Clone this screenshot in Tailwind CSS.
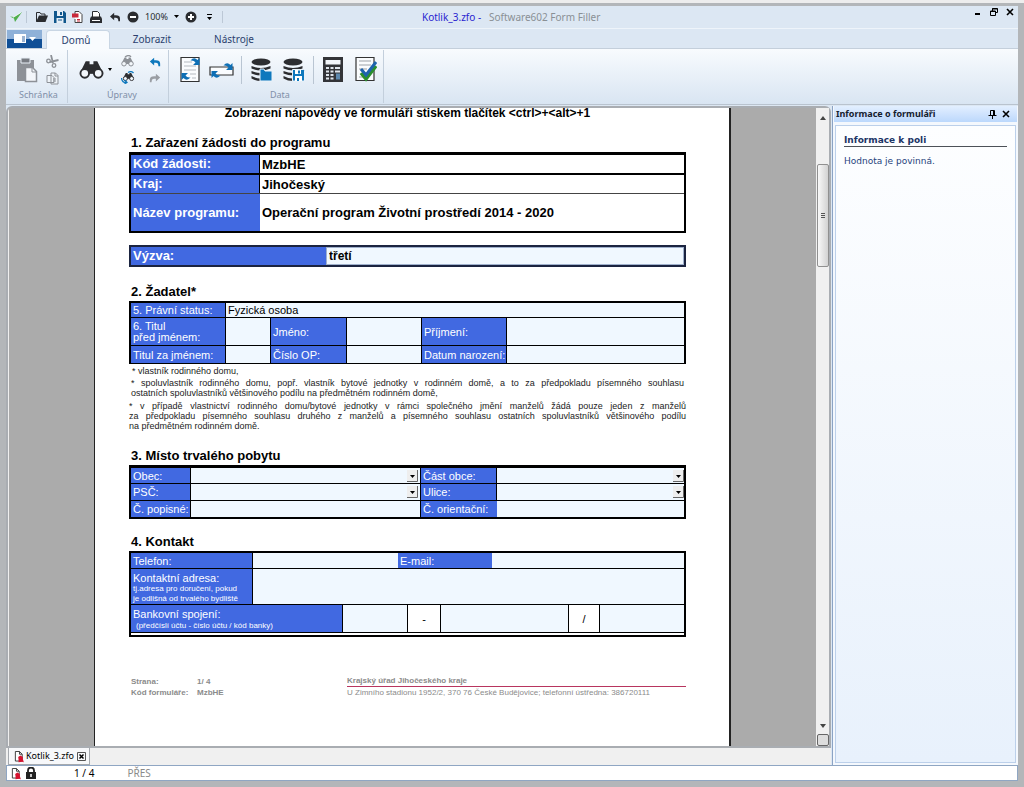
<!DOCTYPE html>
<html lang="cs" class="h-full bg-[#ededed] pt-[3px]">
<head>
<meta charset="utf-8">
<title>Kotlik_3.zfo - Software602 Form Filler</title>
<script src="https://cdn.jsdelivr.net/npm/@tailwindcss/browser@4"></script>
</head>
<body class="flex h-full flex-col overflow-hidden border-x-[6px] border-t-[3px] border-b-[6px] border-[#b3b6b9] bg-[#dce7f3] font-['Noto_Sans',sans-serif] text-[11px] leading-4 text-black">

<svg class="hidden">
  <defs>
    <symbol id="redo" viewBox="0 0 14 12"><path d="M1 11V8q0-4 5-4h2V1l5 4.500-5 4.500V7H6Q3 7 3 11z"/></symbol>
    <symbol id="binoc" viewBox="0 0 26 20"><path d="M7 1h4v3h4V1h4l6 12H1z"/><circle cx="6" cy="13.500" r="4.500" fill="#f3f7fb" stroke="currentColor" stroke-width="2"/><circle cx="20" cy="13.500" r="4.500" fill="#f3f7fb" stroke="currentColor" stroke-width="2"/><path d="M10 8h6v6h-6z"/></symbol>
    <symbol id="doc" viewBox="0 0 11 13"><path d="M1.500 1h4.500l3 3v7.500h-7.500z" fill="#fff" stroke="#333" stroke-width="1"/><path d="M6 1v3h3" fill="none" stroke="#333"/><path d="M5 12.800V9.500L4.600 7 7 5.500 9.800 7v2.500l1 3.300-2-.6z" fill="#d5122e"/></symbol>
    <symbol id="db" viewBox="0 0 22 24"><ellipse cx="10" cy="4" rx="9.500" ry="3.500"/><path d="M.5 8q9.500 4 19 0v2.500q-9.500 4-19 0zM.5 13q9.500 4 19 0v2.500q-9.500 4-19 0zM.5 18q6 3 10 2.500V23q-6 0-10-2.500z"/></symbol>
    <symbol id="turn" viewBox="0 0 10 9"><path d="M.5 3.500Q4-.5 7.500 3L9.500 1v7H3l2.500-2.500Q4 3 .5 3.500z" fill="#0e6fb5"/></symbol>
  </defs>
</svg>

<header class="shrink-0">
  <div class="flex h-[23px] items-center border-b border-[#eef4fa] pl-1">
    <svg class="h-3 w-3" viewBox="0 0 12 12"><path d="M0 5.500l4 .5 8-5-7 10-1-3.500z" fill="#4fae4c"/><path d="M3 6.500L11 1.500" stroke="#fff" stroke-width=".7"/></svg>
    <span class="mx-1 h-3 w-px bg-[#bcc8d6]"></span>
    <div class="flex items-center gap-[6px] pl-[5px] text-[#2a2c30]">
      <button aria-label="Otevřít"><svg class="h-3 w-3" viewBox="0 0 12 12"><path d="M.5 10.500v-9H4l1 1.500h4v2" fill="none" stroke="currentColor"/><path d="M0 11l3-6.500h9L9.500 11z" fill="currentColor"/></svg></button>
      <button aria-label="Uložit"><svg class="h-3 w-3" viewBox="0 0 12 12"><path d="M0 0h10l2 2v10H0z" fill="#10568c"/><path d="M3 0h6v5H3zM2.500 7h7v5h-7z" fill="#e6eef6"/><path d="M6 1h2v3H6zM4 8.500h4v1H4z" fill="#10568c"/></svg></button>
      <button aria-label="Export do PDF"><svg class="h-3 w-3" viewBox="0 0 12 12"><path d="M3 3.500V.5h4l3 3v8H3V8" fill="#fff" stroke="#444"/><path d="M0 2.500h6.500v4H0z" fill="#c9283a"/><path d="M5 8.500h3M5 10h3" stroke="#c9283a"/></svg></button>
      <button aria-label="Tisk"><svg class="h-3 w-3" viewBox="0 0 12 12"><path d="M2.500 6V.5h5l2 2V6" fill="#fff" stroke="currentColor"/><path d="M1 5.500h10l1 2.500v4H0V8z" fill="currentColor"/><path d="M2 9.500h8" stroke="#fff"/></svg></button>
      <button aria-label="Zpět" class="ml-px"><svg class="h-[10px] w-3 -scale-x-100 fill-current"><use href="#redo"/></svg></button>
      <button aria-label="Oddálit"><svg class="h-3 w-3" viewBox="0 0 12 12"><circle cx="6" cy="6" r="5.500" fill="currentColor"/><path d="M3 6h6" stroke="#fff" stroke-width="2"/></svg></button>
      <span class="text-[9px]">100%</span>
      <svg class="h-1 w-[5px]" viewBox="0 0 5 4"><path d="M0 0h5L2.500 3z"/></svg>
      <button aria-label="Přiblížit"><svg class="h-3 w-3" viewBox="0 0 12 12"><circle cx="6" cy="6" r="5.500" fill="currentColor"/><path d="M3 6h6M6 3v6" stroke="#fff" stroke-width="2"/></svg></button>
      <svg class="ml-1 h-[6px] w-[5px]" viewBox="0 0 5 6"><path d="M0 0h5v1H0zM0 3h5L2.500 6z"/></svg>
      <span class="ml-1 h-3 w-px bg-[#bcc8d6]"></span>
    </div>
    <h1 class="ml-[199px] text-[10px] whitespace-pre text-[#2a1fd0]">Kotlik_3.zfo -  <span class="text-[#8a9095]"> Software602 Form Filler</span></h1>
    <div class="ml-auto flex items-center gap-2 self-start pt-[2px] pr-1">
      <button aria-label="Minimalizovat"><svg class="h-2 w-2" viewBox="0 0 8 8"><path d="M1 6h5" stroke="#000" stroke-width="2"/></svg></button>
      <button aria-label="Obnovit"><svg class="h-2 w-2" viewBox="0 0 8 8"><path d="M2.500 3V.5h5v4H6M.5 3h5v4.500h-5zM2 1h5.500M0 3.500h6" fill="none" stroke="#000"/></svg></button>
      <button aria-label="Zavřít"><svg class="h-2 w-2" viewBox="0 0 8 8"><path d="M1 1l6 6M7 1l-6 6" stroke="#000" stroke-width="1.600"/></svg></button>
    </div>
  </div>

  <nav class="flex h-[20px] items-end border-b border-[#c4cfdb] text-[10px] text-[#2b3f6e]">
    <button aria-label="Nabídka" class="mr-1 ml-px flex h-[18px] w-[35px] items-center justify-center bg-linear-to-b from-[#8fb1d8] from-50% to-[#104f96] to-50%">
      <svg class="h-3 w-6" viewBox="0 0 24 12"><path d="M1 1h12v9H1zM16 4h7l-3.500 4z" fill="#fff"/><path d="M9 4h3M9 6h3M9 8h3" stroke="#3a6aa5"/></svg>
    </button>
    <a href="#" class="-mb-px flex h-[19px] w-16 items-center justify-center rounded-t-sm border-x border-t border-[#c9d6e4] bg-[#f8fbfe] pr-1">Domů</a>
    <a href="#" class="flex h-[19px] w-[84px] items-center justify-center">Zobrazit</a>
    <a href="#" class="flex h-[19px] w-20 items-center justify-center">Nástroje</a>
  </nav>

  <div class="flex h-[55px] bg-linear-to-b from-[#f8fbfe] to-[#d9e5f2] pt-px pb-px text-[9px] text-[#7f8fa8]">
    <section class="flex w-[62px] flex-col border-r border-[#c3cfdc] pl-[10px]">
      <div class="flex flex-1 items-center gap-2 text-[#8d9197]">
        <button aria-label="Vložit"><svg class="h-[26px] w-[22px]" viewBox="0 0 22 26"><path d="M1 3h17v21H1z" fill="#8d9197"/><path d="M5 1h9v5H5z" fill="#777b82" stroke="#e8eff6"/><path d="M9.500 10.500h7l4 4v10h-11z" fill="#f3f6fa" stroke="#8d9197" stroke-width="1.500"/><path d="M16 10v5h5" fill="none" stroke="#8d9197"/></svg></button>
        <div class="flex flex-col gap-1">
          <button aria-label="Vyjmout"><svg class="block h-[13px] w-[13px]" viewBox="0 0 13 13"><path d="M5 0l2 8M12.500 5L4 7" stroke="currentColor" stroke-width="1.800"/><circle cx="2.500" cy="6" r="1.800" fill="none" stroke="currentColor" stroke-width="1.300"/><circle cx="8" cy="10.500" r="1.800" fill="none" stroke="currentColor" stroke-width="1.300"/></svg></button>
          <button aria-label="Kopírovat"><svg class="block h-[13px] w-[13px]" viewBox="0 0 13 13"><path d="M1 3.500h5l2 2v5H1zM5 1h4.500l2.500 2.500V12H5z" fill="#eef3f8" stroke="currentColor"/><path d="M9 1v3h3M7 7h3M7 9h3" fill="none" stroke="currentColor"/></svg></button>
        </div>
      </div>
      <h2 class="pb-[2px] pl-[3px] leading-3">Schránka</h2>
    </section>
    <section class="flex w-[101px] flex-col border-r border-[#c3cfdc] pl-[11px]">
      <div class="flex flex-1 items-center">
        <button aria-label="Najít"><svg class="h-5 w-[25px] fill-current text-[#2c2d30]"><use href="#binoc"/></svg></button>
        <svg class="ml-1 h-1 w-1" viewBox="0 0 4 4"><path d="M0 0h4L2 3z"/></svg>
        <div class="ml-[9px] flex flex-col gap-1">
          <button aria-label="Najít další"><svg class="block h-3 w-[13px] fill-current text-[#8d9197]" viewBox="0 0 26 24"><use href="#binoc" y="4" width="26" height="20"/><path d="M8 4q8-6 12 0" fill="none" stroke="currentColor" stroke-width="2.500"/></svg></button>
          <button aria-label="Nahradit"><svg class="block h-[13px] w-[14px] fill-current text-[#2c2d30]" viewBox="0 0 28 26"><use href="#binoc" x="3" y="3" width="24" height="18"/><path d="M1 14q1 9 9 9M7 18l5 5-5 3M14 3q7-4 11 1" fill="none" stroke="#0e78bd" stroke-width="2.500"/></svg></button>
        </div>
        <div class="ml-[14px] flex flex-col gap-1">
          <button aria-label="Zpět"><svg class="block h-3 w-3 -scale-x-100 fill-[#0e78bd]"><use href="#redo"/></svg></button>
          <button aria-label="Znovu"><svg class="block h-3 w-3 fill-[#9a9ea4]"><use href="#redo"/></svg></button>
        </div>
      </div>
      <h2 class="pb-[2px] pl-[28px] leading-3">Úpravy</h2>
    </section>
    <section class="flex w-[215px] flex-col border-r border-[#c3cfdc] pl-[11px]">
      <div class="flex flex-1 items-center">
        <button aria-label="Obnovit formulář"><svg class="h-[27px] w-[21px]" viewBox="0 0 21 27"><path d="M1 1.500h18v24H1z" fill="#fafcfe" stroke="#333" stroke-width="1.200"/><path d="M4 6h8M4 10h12M4 14h12M10 18h6M12 22h4" stroke="#b5bac0"/><use href="#turn" x="10" y="1" width="10" height="9"/><use href="#turn" width="10" height="9" transform="rotate(180 5.500 12.500)"/></svg></button>
        <button aria-label="Obnovit pole" class="ml-2"><svg class="h-5 w-[26px]" viewBox="0 0 26 20"><path d="M1 7h23v8H1z" fill="#fafcfe" stroke="#333" stroke-width="1.200"/><use href="#turn" x="14" y="2" width="10" height="9"/><use href="#turn" width="10" height="9" transform="rotate(180 6 9.500)"/></svg></button>
        <span class="ml-[6px] h-7 w-px bg-[#b9c5d2]"></span>
        <button aria-label="Načíst data" class="ml-[9px]"><svg class="h-6 w-[22px]" viewBox="0 0 22 24"><use href="#db" fill="#2c2d30"/><path d="M9 11h4l1 2h7v10H9z" fill="#0e78bd" stroke="#e8f1f9"/></svg></button>
        <button aria-label="Uložit data" class="ml-[10px]"><svg class="h-6 w-[22px]" viewBox="0 0 22 24"><use href="#db" fill="#2c2d30"/><path d="M9.500 11.500h11l1 1v10.500h-12z" fill="#0e78bd" stroke="#e8f1f9"/><path d="M12 12h6v4h-6zM12 18h7v5h-7z" fill="#fff"/><path d="M15 12.500h2v3h-2zM14 20h2v3h-2z" fill="#0e78bd"/></svg></button>
        <span class="ml-2 h-7 w-px bg-[#b9c5d2]"></span>
        <button aria-label="Kalkulačka" class="ml-[9px]"><svg class="h-[25px] w-5" viewBox="0 0 20 25"><path d="M0 0h20v25H0z" fill="#333438"/><path d="M2.500 3h15v4.500h-15z" fill="#f3f6fa"/><path d="M3 11h3m1.500 0h3m1.500 0h5M3 14.500h3m1.500 0h3m1.500 0h5M3 18h3m1.500 0h3M3 21.500h3m1.500 0h3" stroke="#dfe5ec" stroke-width="2"/><path d="M13 16.500h4v6h-4z" fill="#5d88ad"/></svg></button>
        <button aria-label="Zkontrolovat" class="ml-3"><svg class="h-[27px] w-[22px]" viewBox="0 0 22 27"><path d="M1 1.500h18v23H1z" fill="#fafcfe" stroke="#333" stroke-width="1.200"/><path d="M4 5h12M4 9h12M4 13h8M4 21h8" stroke="#9da2a8"/><path d="M6 17l5 6L21 10" fill="none" stroke="#2a8f2d" stroke-width="3.500"/><path d="M6 13l5 6L21 6" fill="none" stroke="#1d63ad" stroke-width="3"/></svg></button>
      </div>
      <h2 class="pb-[2px] pl-[90px] leading-3">Data</h2>
    </section>
  </div>
</header>

<div class="flex min-h-0 flex-1 border-t border-[#b9c3ce] pt-px">
  <div class="flex min-w-0 flex-1 flex-col">
    <main class="flex min-h-0 flex-1 rounded-t-md border-2 border-[#a9adb2] bg-[#efefef] pl-px">
      <div class="flex min-w-0 flex-1 justify-center overflow-hidden bg-[#ababab]">
        <form class="w-[637px] shrink-0 border-r-2 border-l border-[#222] bg-white pr-[43px] pl-[34px] font-['Liberation_Sans',Arial,sans-serif] text-[11px] leading-3">
          <p class="-mt-[2px] text-center text-xs leading-[14px] font-bold">Zobrazení nápovědy ve formuláři stiskem tlačítek &lt;ctrl&gt;+&lt;alt&gt;+1</p>

          <h2 class="mt-[15px] ml-[2px] h-[17px] text-[13px] leading-4 font-bold">1. Zařazení žádosti do programu</h2>
          <div class="border-2 border-t-[3px] border-black text-[13px] font-bold">
            <div class="flex h-5 border-b-2 border-black"><label for="kod" class="flex w-[129px] items-center border-r border-black bg-[#4169e1] pl-[2px] text-white">Kód žádosti:</label><input id="kod" value="MzbHE" class="min-w-0 flex-1 pl-[2px]"></div>
            <div class="flex h-[19px] border-b border-[#444]"><label for="kraj" class="flex w-[129px] items-center border-r border-black bg-[#4169e1] pl-[2px] text-white">Kraj:</label><input id="kraj" value="Jihočeský" class="min-w-0 flex-1 pl-[2px]"></div>
            <div class="flex h-[37px]"><label for="prog" class="flex w-[129px] items-center bg-[#4169e1] pl-[2px] text-white">Název programu:</label><input id="prog" value="Operační program Životní prostředí 2014 - 2020" class="min-w-0 flex-1 pl-[2px]"></div>
          </div>

          <div class="mt-3 flex h-[22px] border-2 border-[#1b2440] text-[13px] font-bold">
            <label for="vyzva" class="flex w-[195px] items-center bg-[#4169e1] pl-[2px] text-white">Výzva:</label><input id="vyzva" value="třetí" class="min-w-0 flex-1 border border-[#9fb0cc] bg-[#f0f8ff] pl-[2px] text-xs">
          </div>

          <h2 class="mt-[17px] ml-[2px] h-[17px] text-[13px] leading-4 font-bold">2. Žadatel*</h2>
          <div class="border-x-2 border-t-2 border-b border-black bg-[#f0f8ff]">
            <div class="flex h-[15px] border-b border-black"><label for="status" class="flex w-[95px] items-center border-r border-black bg-[#4169e1] pl-[2px] text-white">5. Právní status:</label><input id="status" value="Fyzická osoba" class="min-w-0 flex-1 pl-[2px]"></div>
            <div class="flex h-7 border-b border-black">
              <label for="t1" class="flex w-[95px] items-center border-r border-black bg-[#4169e1] pl-[2px] leading-[11px] text-white">6. Titul<br>před jménem:</label><input id="t1" class="w-[45px] border-r border-black">
              <label for="jm" class="flex w-[76px] items-center border-r border-black bg-[#4169e1] pl-[2px] text-white">Jméno:</label><input id="jm" class="w-[75px] border-r border-black">
              <label for="pr" class="flex w-[85px] items-center border-r border-black bg-[#4169e1] pl-[2px] text-white">Příjmení:</label><input id="pr" class="min-w-0 flex-1">
            </div>
            <div class="flex h-[17px]">
              <label for="t2" class="flex w-[95px] items-center border-r border-black bg-[#4169e1] pl-[2px] text-white">Titul za jménem:</label><input id="t2" class="w-[45px] border-r border-black">
              <label for="op" class="flex w-[76px] items-center border-r border-black bg-[#4169e1] pl-[2px] text-white">Číslo OP:</label><input id="op" class="w-[75px] border-r border-black">
              <label for="dn" class="flex w-[85px] items-center border-r border-black bg-[#4169e1] pl-[2px] text-white">Datum narození:</label><input id="dn" class="min-w-0 flex-1">
            </div>
          </div>
          <div class="text-[9px] leading-[10px] text-[#222]">
            <p class="mt-[2px] pl-[3px]">* vlastník rodinného domu,</p>
            <p class="mt-[2px] px-[2px]"><span class="block [text-align-last:justify]">* spoluvlastník rodinného domu, popř. vlastník bytové jednotky v rodinném domě, a to za předpokladu písemného souhlasu</span> ostatních spoluvlastníků většinového podílu na předmětném rodinném domě,</p>
            <p class="mt-[3px]"><span class="block [text-align-last:justify]">* v případě vlastnictví rodinného domu/bytové jednotky v rámci společného jmění manželů žádá pouze jeden z manželů</span> <span class="block [text-align-last:justify]">za předpokladu písemného souhlasu druhého z manželů a písemného souhlasu ostatních spoluvlastníků většinového podílu</span> na předmětném rodinném domě.</p>
          </div>

          <h2 class="mt-[17px] ml-[2px] h-[17px] text-[13px] leading-4 font-bold">3. Místo trvalého pobytu</h2>
          <div class="border-2 border-t-[3px] border-black bg-[#f0f8ff]">
            <div class="flex h-4 border-b border-black">
              <label for="obec" class="flex w-[60px] items-center border-r border-black bg-[#4169e1] pl-[2px] text-white">Obec:</label>
              <div class="relative w-[230px] border-r border-black"><select id="obec" class="block h-full w-full appearance-none"></select><svg class="pointer-events-none absolute right-[2px] bottom-px h-3 w-[11px]" viewBox="0 0 11 12"><path d="M0 0h11v12H0z" fill="#eee"/><path d="M0 11.500h10.500V0" fill="none" stroke="#666"/><path d="M3 5h5L5.500 8z"/></svg></div>
              <label for="cast" class="flex w-[76px] items-center border-r border-black bg-[#4169e1] pl-[2px] text-white">Část obce:</label>
              <div class="relative min-w-0 flex-1"><select id="cast" class="block h-full w-full appearance-none"></select><svg class="pointer-events-none absolute right-0 bottom-px h-3 w-[11px]" viewBox="0 0 11 12"><path d="M0 0h11v12H0z" fill="#eee"/><path d="M0 11.500h10.500V0" fill="none" stroke="#666"/><path d="M3 5h5L5.500 8z"/></svg></div>
            </div>
            <div class="flex h-[17px] border-b border-black">
              <label for="psc" class="flex w-[60px] items-center border-r border-black bg-[#4169e1] pl-[2px] text-white">PSČ:</label>
              <div class="relative w-[230px] border-r border-black"><select id="psc" class="block h-full w-full appearance-none"></select><svg class="pointer-events-none absolute right-[2px] bottom-[2px] h-3 w-[11px]" viewBox="0 0 11 12"><path d="M0 0h11v12H0z" fill="#eee"/><path d="M0 11.500h10.500V0" fill="none" stroke="#666"/><path d="M3 5h5L5.500 8z"/></svg></div>
              <label for="ulice" class="flex w-[76px] items-center border-r border-black bg-[#4169e1] pl-[2px] text-white">Ulice:</label>
              <div class="relative min-w-0 flex-1"><select id="ulice" class="block h-full w-full appearance-none"></select><svg class="pointer-events-none absolute right-0 bottom-[2px] h-3 w-[11px]" viewBox="0 0 11 12"><path d="M0 0h11v12H0z" fill="#eee"/><path d="M0 11.500h10.500V0" fill="none" stroke="#666"/><path d="M3 5h5L5.500 8z"/></svg></div>
            </div>
            <div class="flex h-4">
              <label for="cp" class="flex w-[60px] items-center border-r border-black bg-[#4169e1] pl-[2px] text-white">Č. popisné:</label><input id="cp" class="w-[230px] border-r border-black">
              <label for="co" class="flex w-[76px] items-center bg-[#4169e1] pl-[2px] text-white">Č. orientační:</label><input id="co" class="min-w-0 flex-1">
            </div>
          </div>

          <h2 class="mt-[15px] ml-[2px] h-[17px] text-[13px] leading-4 font-bold">4. Kontakt</h2>
          <div class="border-2 border-black bg-[#f0f8ff]">
            <div class="flex h-4 border-b border-black">
              <label for="tel" class="flex w-[122px] items-center border-r border-black bg-[#4169e1] pl-[2px] text-white">Telefon:</label><input id="tel" class="w-[145px]">
              <label for="em" class="flex w-[94px] items-center bg-[#4169e1] pl-[2px] text-white">E-mail:</label><input id="em" class="min-w-0 flex-1">
            </div>
            <div class="flex h-9 border-b border-black">
              <label for="adr" class="w-[122px] border-r border-black bg-[#4169e1] pt-[3px] pl-[2px] text-white">Kontaktní adresa:<small class="block text-[8px] leading-[10px]">tj.adresa pro doručení, pokud<br>je odlišná od trvalého bydliště</small></label><textarea id="adr" class="min-w-0 flex-1 resize-none"></textarea>
            </div>
            <div class="flex h-7 border-b border-black">
              <label for="b1" class="w-[212px] border-r border-black bg-[#4169e1] pt-[3px] pl-[2px] text-white">Bankovní spojení:<small class="block pl-[3px] text-[8px]">(předčíslí účtu - číslo účtu / kód banky)</small></label><input id="b1" class="w-16">
              <span class="flex w-[34px] items-center justify-center border-x border-black bg-white">-</span><input aria-label="Číslo účtu" class="w-[127px]">
              <span class="flex w-8 items-center justify-center border-x border-black bg-white">/</span><input aria-label="Kód banky" class="min-w-0 flex-1">
            </div>
            <div class="h-[2px] bg-white"></div>
          </div>

          <footer class="mt-[39px] flex text-[8px] leading-[11px] text-[#8b8b8b]">
            <dl class="ml-[2px] grid w-[216px] grid-cols-[66px_1fr] content-start font-bold"><dt>Strana:</dt><dd>1/ 4</dd><dt>Kód formuláře:</dt><dd>MzbHE</dd></dl>
            <div class="flex-1"><p class="leading-[10px] font-bold">Krajský úřad Jihočeského kraje</p><div class="h-px bg-[#b8355f]"></div><p>U Zimního stadionu 1952/2, 370 76 České Budějovice; telefonní ústředna: 386720111</p></div>
          </footer>
        </form>
      </div>
      <div class="flex w-[13px] shrink-0 flex-col items-center bg-[#f0f0f0] pt-1" aria-hidden="true">
        <svg class="mt-1 h-1 w-[6px]" viewBox="0 0 6 4"><path d="M0 4h6L3 0z" fill="#444"/></svg>
        <div class="mt-[44px] flex h-[103px] w-3 flex-col items-center justify-center gap-px rounded-xs border border-[#909090] bg-linear-to-r from-[#f8f8f8] to-[#d2d2d2]"><i class="h-px w-1 bg-[#555]"></i><i class="h-px w-1 bg-[#555]"></i><i class="h-px w-1 bg-[#555]"></i></div>
        <svg class="mt-auto h-1 w-[6px]" viewBox="0 0 6 4"><path d="M0 0h6L3 4z" fill="#444"/></svg>
        <span class="mt-[6px] h-3 w-3 rounded-xs border border-[#666] bg-[#ddd]"></span>
      </div>
    </main>
    <div class="flex h-[17px] shrink-0 bg-[#f0f0f0] pl-[2px]">
      <div class="flex w-[82px] items-center gap-[2px] border-x border-b border-[#a5a9ae] bg-[#f7f8fa] pl-[5px] text-[9px]"><svg class="h-[13px] w-[10px]"><use href="#doc"/></svg>Kotlik_3.zfo<button aria-label="Zavřít kartu" class="ml-px"><svg class="block h-[9px] w-[9px]" viewBox="0 0 9 9"><path d="M.5.5h8v8h-8z" fill="none" stroke="#555"/><path d="M2.500 2.500l4 4M6.500 2.500l-4 4" stroke="#000" stroke-width="1.500"/></svg></button></div>
    </div>
  </div>

  <aside class="ml-px flex w-[186px] shrink-0 flex-col border-l border-[#8ba3c4] bg-[#f4f8fd] px-px">
    <div class="flex h-4 items-center bg-linear-to-b from-[#e3efff] to-[#bcd8fc] pr-[7px] pl-[2px]">
      <h2 class="text-[9px] font-bold text-[#15202e]">Informace o formuláři</h2>
      <button aria-label="Připnout" class="ml-auto"><svg class="block h-[9px] w-[9px]" viewBox="0 0 9 9"><path d="M2.500 5.500v-5h4v5M5.500.5v5M.5 5.500h8M4.500 5.500V9" fill="none" stroke="#000"/></svg></button>
      <button aria-label="Zavřít panel" class="ml-[5px]"><svg class="block h-2 w-2" viewBox="0 0 8 8"><path d="M1 1l6 6M7 1l-6 6" stroke="#000" stroke-width="1.600"/></svg></button>
    </div>
    <div class="mx-px mt-[3px] mb-[2px] flex-1 border border-[#bcd0ea] bg-linear-to-b from-[#fdfeff] to-[#e8f1fc] px-2 pt-2 font-['DejaVu_Sans',sans-serif] text-[9px] text-[#26427c]">
      <h3 class="border-b border-[#4d5158] leading-[12px] font-bold text-[#1c3566]">Informace k poli</h3>
      <p class="mt-[6px]">Hodnota je povinná.</p>
    </div>
  </aside>
</div>

<footer class="flex h-4 shrink-0 items-center border border-[#8fa6c3] bg-white pl-1 text-[10px]">
  <svg class="h-[13px] w-[10px]"><use href="#doc"/></svg>
  <svg class="ml-[5px] h-3 w-[10px]" viewBox="0 0 10 12"><path d="M2 6V3.500a3 3 0 016 0V6" fill="none" stroke="#222" stroke-width="1.800"/><path d="M0 5h10v7H0z" fill="#222"/><path d="M5 7v3" stroke="#fff" stroke-width="1.500"/></svg>
  <span class="ml-[38px]">1 / 4</span>
  <span class="ml-[33px] text-[#8a8a8a]">PŘES</span>
</footer>
</body>
</html>
